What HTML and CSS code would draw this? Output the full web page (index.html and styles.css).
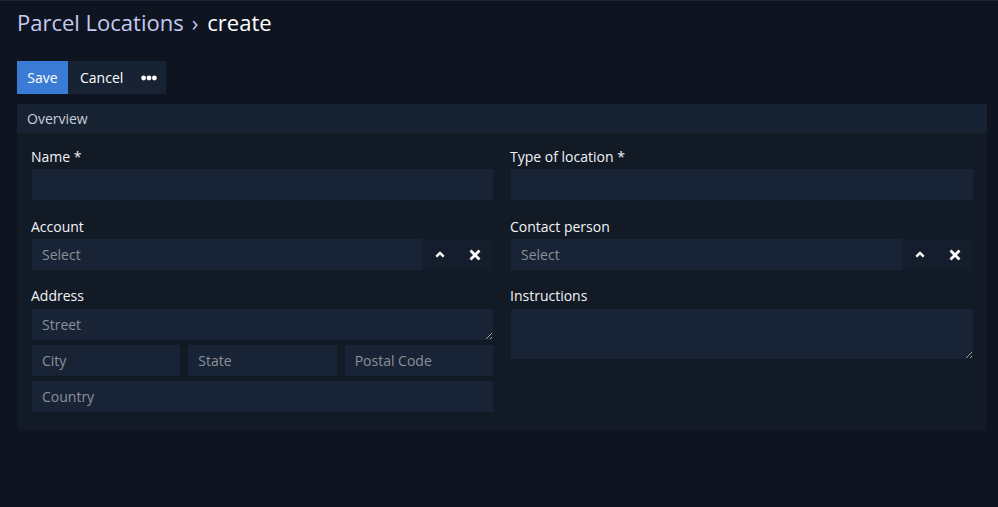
FILE: index.html
```html
<!DOCTYPE html>
<html lang="en">
<head>
<meta charset="utf-8">
<title>Parcel Locations › create</title>
<link rel="stylesheet" href="styles.css">
</head>
<body>
<div class="page">
  <h1 class="title"><span class="crumb">Parcel Locations</span><span class="sep">›</span><span class="current">create</span></h1>
  <div class="toolbar">
    <button class="btn btn-primary">Save</button>
    <button class="btn">Cancel</button>
    <button class="btn btn-more" aria-label="More"><svg width="16" height="6" viewBox="0 0 16 6"><circle cx="2.6" cy="3" r="2.4" fill="#fff"/><circle cx="8" cy="3" r="2.4" fill="#fff"/><circle cx="13.4" cy="3" r="2.4" fill="#fff"/></svg></button>
  </div>
  <section class="panel">
    <div class="panel-head">Overview</div>
    <div class="panel-body">
      <div class="col">
        <div class="field field-first">
          <label class="label">Name *</label>
          <input class="input" type="text">
        </div>
        <div class="field field-second">
          <label class="label">Account</label>
          <div class="select">
            <input class="input select-input" type="text" placeholder="Select">
            <div class="select-btns">
              <span class="sbtn"><svg width="10" height="7" viewBox="0 0 10 7"><path d="M1.3 5.7 L5 2 L8.7 5.7" fill="none" stroke="#fff" stroke-width="2.4"/></svg></span>
              <span class="sbtn"><svg width="12" height="12" viewBox="0 0 12 12"><path d="M1.5 1.5 L10.5 10.5 M10.5 1.5 L1.5 10.5" fill="none" stroke="#fff" stroke-width="2.8"/></svg></span>
            </div>
          </div>
        </div>
        <div class="field">
          <label class="label">Address</label>
          <textarea class="input textarea street" placeholder="Street"></textarea>
          <div class="addr-row">
            <input class="input" type="text" placeholder="City">
            <input class="input" type="text" placeholder="State">
            <input class="input" type="text" placeholder="Postal Code">
          </div>
          <input class="input" type="text" placeholder="Country">
        </div>
      </div>
      <div class="col">
        <div class="field field-first">
          <label class="label">Type of location *</label>
          <input class="input" type="text">
        </div>
        <div class="field field-second">
          <label class="label">Contact person</label>
          <div class="select">
            <input class="input select-input" type="text" placeholder="Select">
            <div class="select-btns">
              <span class="sbtn"><svg width="10" height="7" viewBox="0 0 10 7"><path d="M1.3 5.7 L5 2 L8.7 5.7" fill="none" stroke="#fff" stroke-width="2.4"/></svg></span>
              <span class="sbtn"><svg width="12" height="12" viewBox="0 0 12 12"><path d="M1.5 1.5 L10.5 10.5 M10.5 1.5 L1.5 10.5" fill="none" stroke="#fff" stroke-width="2.8"/></svg></span>
            </div>
          </div>
        </div>
        <div class="field">
          <label class="label">Instructions</label>
          <textarea class="input textarea instructions"></textarea>
        </div>
      </div>
    </div>
  </section>
</div>
</body>
</html>
```
FILE: styles.css
```css
html, body {
  margin: 0;
  padding: 0;
  background: #0f1520;
  font-family: "Open Sans", "Noto Sans", sans-serif;
  font-size: 14px;
  color: #e9ecf1;
}
body {
  border-top: 1px solid #1c2535;
  height: 506px;
  overflow: hidden;
}
.page {
  padding: 0 11px 0 17px;
}
.title {
  margin: 0;
  padding-top: 6px;
  height: 60px;
  box-sizing: border-box;
  font-size: 22px;
  font-weight: 400;
  line-height: 30px;
  letter-spacing: 0;
}
.crumb, .sep {
  color: #c4caf0;
}
.sep {
  margin: 0 9px 0 8px;
}
.current {
  color: #ffffff;
}
.toolbar {
  display: inline-flex;
  background: #172233;
  height: 33px;
  vertical-align: top;
}
.btn {
  border: none;
  background: transparent;
  color: #ffffff;
  font-family: inherit;
  font-size: 14px;
  height: 33px;
  padding: 0 12px;
  margin: 0;
  cursor: pointer;
}
.btn-primary {
  background: #3a7bd5;
  width: 51px;
  padding: 0;
}
.btn-more {
  display: flex;
  align-items: center;
  padding: 0 9px 0 6px;
}
.panel {
  margin-top: 10px;
  background: #121a26;
  padding-bottom: 19px;
}
.panel-head {
  background: #172233;
  height: 29px;
  line-height: 29px;
  padding: 0 10px;
  color: #c8ced8;
  font-size: 14px;
}
.panel-body {
  display: grid;
  grid-template-columns: 461px 462px;
  column-gap: 18px;
  padding: 14px 14px 0 15px;
}
.field {
  display: flex;
  flex-direction: column;
  margin-bottom: 16px;
}
.field-first {
  margin-bottom: 17px;
}
.field-second {
  margin-bottom: 16px;
}
.field:last-child {
  margin-bottom: 0;
}
.label {
  line-height: 20px;
  margin-bottom: 2px;
  color: #f2f4f7;
  padding-left: 0;
  margin-left: -1px;
}
.input {
  display: block;
  box-sizing: border-box;
  width: 100%;
  height: 31px;
  border: none;
  outline: none;
  background: #182436;
  color: #e9ecf1;
  font-family: inherit;
  font-size: 14px;
  padding: 0 10px;
  margin: 0;
  border-radius: 0;
}
.input::placeholder {
  color: #8a9098;
  opacity: 1;
}
.textarea {
  resize: vertical;
  padding: 7px 10px;
  line-height: 17px;
}
.street {
  height: 31px;
  margin-top: 1px;
}
.instructions {
  height: 50px;
  margin-top: 1px;
}
.addr-row {
  display: grid;
  grid-template-columns: 1fr 1fr 1fr;
  column-gap: 8px;
  margin: 5px 0;
}
.select {
  display: flex;
  height: 31px;
}
.select-input {
  flex: 1;
  width: auto;
}
.select-btns {
  display: flex;
  background: #141d2b;
  width: 71px;
  flex: none;
}
.sbtn {
  flex: 1;
  display: flex;
  align-items: center;
  justify-content: center;
}
```
